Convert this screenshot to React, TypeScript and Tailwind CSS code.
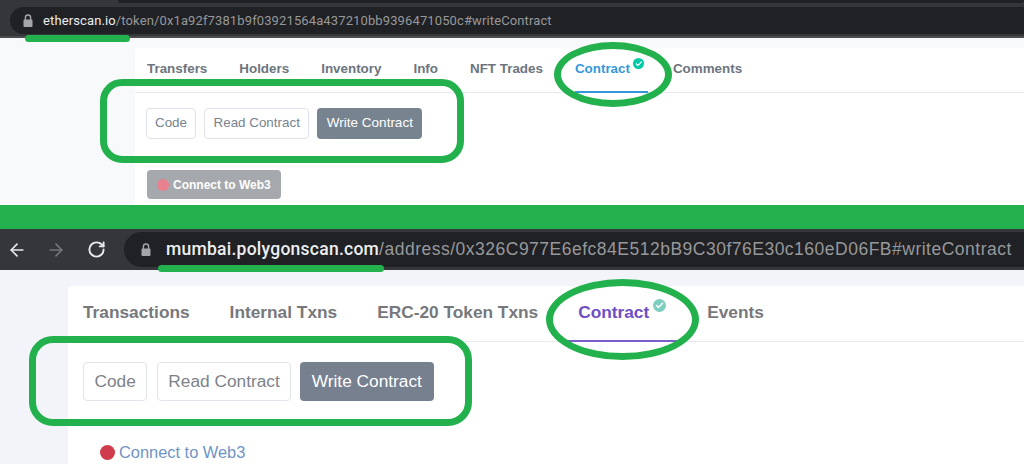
import { ArrowLeft, ArrowRight, Check, RotateCw } from "lucide-react";

function Badge({ className }: { className: string }) {
  return (
    <span className={`flex items-center justify-center rounded-full ${className}`}>
      <Check strokeWidth={4} className="size-[70%] text-white" />
    </span>
  );
}

function LockIcon({ className }: { className: string }) {
  return (
    <svg viewBox="0 0 10 13" className={className} fill="none">
      <path d="M2.4 6V3.6a2.6 2.6 0 0 1 5.2 0V6" stroke="#a5a6a9" strokeWidth="1.4" />
      <rect x="0.5" y="5.5" width="9" height="7.5" rx="1" fill="#a5a6a9" />
    </svg>
  );
}

function TopSection() {
  const tabs = ["Transfers", "Holders", "Inventory", "Info", "NFT Trades"];
  return (
    <section className="h-[205px] bg-[#f8f9fa]">
      <div className="h-[38px] border-b-2 border-[#4a4b4e] bg-[#35363a]">
        <div className="ml-[118px] h-[3px] rounded-b bg-[#202124]" />
        <div className="ml-[10px] mt-1 flex h-[27px] items-center rounded-l-full bg-[#202124] pl-[13px]">
          <LockIcon className="h-[13px] w-[10px]" />
          <p className="ml-[10px] font-['Roboto',sans-serif] text-[13px] tracking-[0.12px] text-[#97989b]">
            <span className="text-[#eceef0]">etherscan.io</span>/token/0x1a92f7381b9f03921564a437210bb9396471050c#writeContract
          </p>
        </div>
      </div>
      <div className="ml-[135px] mt-[10px] h-[157px] overflow-hidden rounded-tl bg-white">
        <div className="flex h-[45px] border-b border-[#e7eaf3] pl-3">
          {tabs.map((t) => (
            <span key={t} className="mr-[32px] pt-[13px] text-[13.4px] leading-4 font-bold text-[#6c757e]">{t}</span>
          ))}
          <span className="flex h-[45px] w-[73px] gap-[3px] border-b-2 border-[#3498db] pt-[13px]">
            <span className="text-[13.4px] leading-4 font-bold text-[#3498db]">Contract</span>
            <Badge className="-mt-[3px] size-[11px] bg-[#00c9a7]" />
          </span>
          <span className="ml-[25px] pt-[13px] text-[13.4px] leading-4 font-bold text-[#6c757e]">Comments</span>
        </div>
        <div className="flex gap-2 pl-[11px] pt-[15px]">
          <span className="flex h-[31px] items-center rounded border border-[#dfe2ec] px-2 text-[13.4px] text-[#77838f]">Code</span>
          <span className="flex h-[31px] items-center rounded border border-[#dfe2ec] px-[8.5px] text-[13.4px] text-[#77838f]">Read Contract</span>
          <span className="flex h-[31px] items-center rounded bg-[#77838f] px-[9.5px] text-[13.5px] text-white">Write Contract</span>
        </div>
        <div className="ml-[12px] mt-[31px] flex h-[29px] w-[134px] items-center rounded-sm bg-[#a5a8ac] pl-[10px] text-[12px] font-bold text-white">
          <span className="mr-[4px] size-[12px] rounded-full bg-[#e8808f]" />
          Connect to Web3
        </div>
      </div>
    </section>
  );
}

function BottomSection() {
  return (
    <section className="h-[235px] bg-[#f3f4f9]">
      <div className="flex h-[41px] items-center bg-[#35363a]">
        <ArrowLeft strokeWidth={2} className="ml-[7px] size-[20px] text-[#e8eaed]" />
        <ArrowRight strokeWidth={2} className="ml-[19px] size-[20px] text-[#75767a]" />
        <RotateCw strokeWidth={2.4} className="ml-[21px] size-[19px] text-[#e8eaed]" />
        <div className="ml-[18px] flex h-[35px] flex-1 items-center rounded-l-full bg-[#202124] pl-[17px]">
          <LockIcon className="h-[13px] w-[10px]" />
          <p className="ml-[15px] -mt-px text-[17.5px] tracking-[0.5px] whitespace-nowrap text-[#97989b]">
            <span className="font-['Roboto',sans-serif] font-medium tracking-[0.25px] text-[#eceef0]">mumbai.polygonscan.com</span>/address/0x326C977E6efc84E512bB9C30f76E30c160eD06FB#writeContract
          </p>
        </div>
      </div>
      <div className="ml-[68px] mt-[16px] h-[178px] overflow-hidden rounded-tl bg-white">
        <div className="flex h-[56px] border-b border-[#e7eaf3] pl-[15px]">
          <span className="mr-10 pt-[16px] text-[17.3px] leading-5 font-bold text-[#77787c]">Transactions</span>
          <span className="mr-10 pt-[16px] text-[17.3px] leading-5 font-bold text-[#77787c]">Internal Txns</span>
          <span className="mr-[29px] pt-[16px] text-[17.3px] leading-5 font-bold text-[#77787c]">ERC-20 Token Txns</span>
          <span className="flex h-[56px] w-[110px] gap-1 border-b-2 border-[#7b5fc9] pl-[11px] pt-[16px]">
            <span className="text-[17.3px] leading-5 font-bold text-[#6f4fc4]">Contract</span>
            <Badge className="-mt-[3px] size-[13px] bg-[#7ecfc2]" />
          </span>
          <span className="ml-[30px] pt-[16px] text-[17.3px] leading-5 font-bold text-[#77787c]">Events</span>
        </div>
        <div className="flex pl-[15px] pt-[20px]">
          <span className="flex h-[39px] items-center rounded border border-[#e2e4ec] px-[10.5px] text-[17.3px] text-[#7e8289]">Code</span>
          <span className="ml-[10px] flex h-[39px] items-center rounded border border-[#e2e4ec] px-[10px] text-[17.3px] text-[#7e8289]">Read Contract</span>
          <span className="ml-[9px] flex h-[39px] items-center rounded bg-[#77808f] px-[12px] text-[17.3px] text-white">Write Contract</span>
        </div>
        <div className="ml-[32px] mt-[41px] flex items-center text-[16.4px] leading-5 text-[#6f94c4]">
          <span className="mr-[4px] size-[15px] rounded-full bg-[#cf3c4c]" />
          Connect to Web3
        </div>
      </div>
    </section>
  );
}

export default function App() {
  return (
    <div className="relative h-[464px] w-[1024px] overflow-hidden bg-white font-['Liberation_Sans',sans-serif]">
      <TopSection />
      <div className="h-[24px] bg-[#22b14c]" />
      <BottomSection />
      {/* hand-drawn green marks over the screenshot */}
      <div className="absolute left-[25px] top-[35px] h-[7px] w-[105px] rounded-full bg-[#22b14c]" />
      <div className="absolute left-[158px] top-[265px] h-[7px] w-[226px] rounded-full bg-[#22b14c]" />
      <div className="absolute left-[100px] top-[79px] h-[84px] w-[364px] rounded-[22px] border-[7px] border-[#22b14c]" />
      <div className="absolute left-[29px] top-[336px] h-[90px] w-[443px] rounded-[24px] border-[7px] border-[#22b14c]" />
      <div className="absolute left-[554px] top-[42px] h-[65px] w-[118px] rounded-[50%] border-[7px] border-[#22b14c]" />
      <div className="absolute left-[546px] top-[279px] h-[81px] w-[153px] rounded-[50%] border-[7px] border-[#22b14c]" />
    </div>
  );
}
